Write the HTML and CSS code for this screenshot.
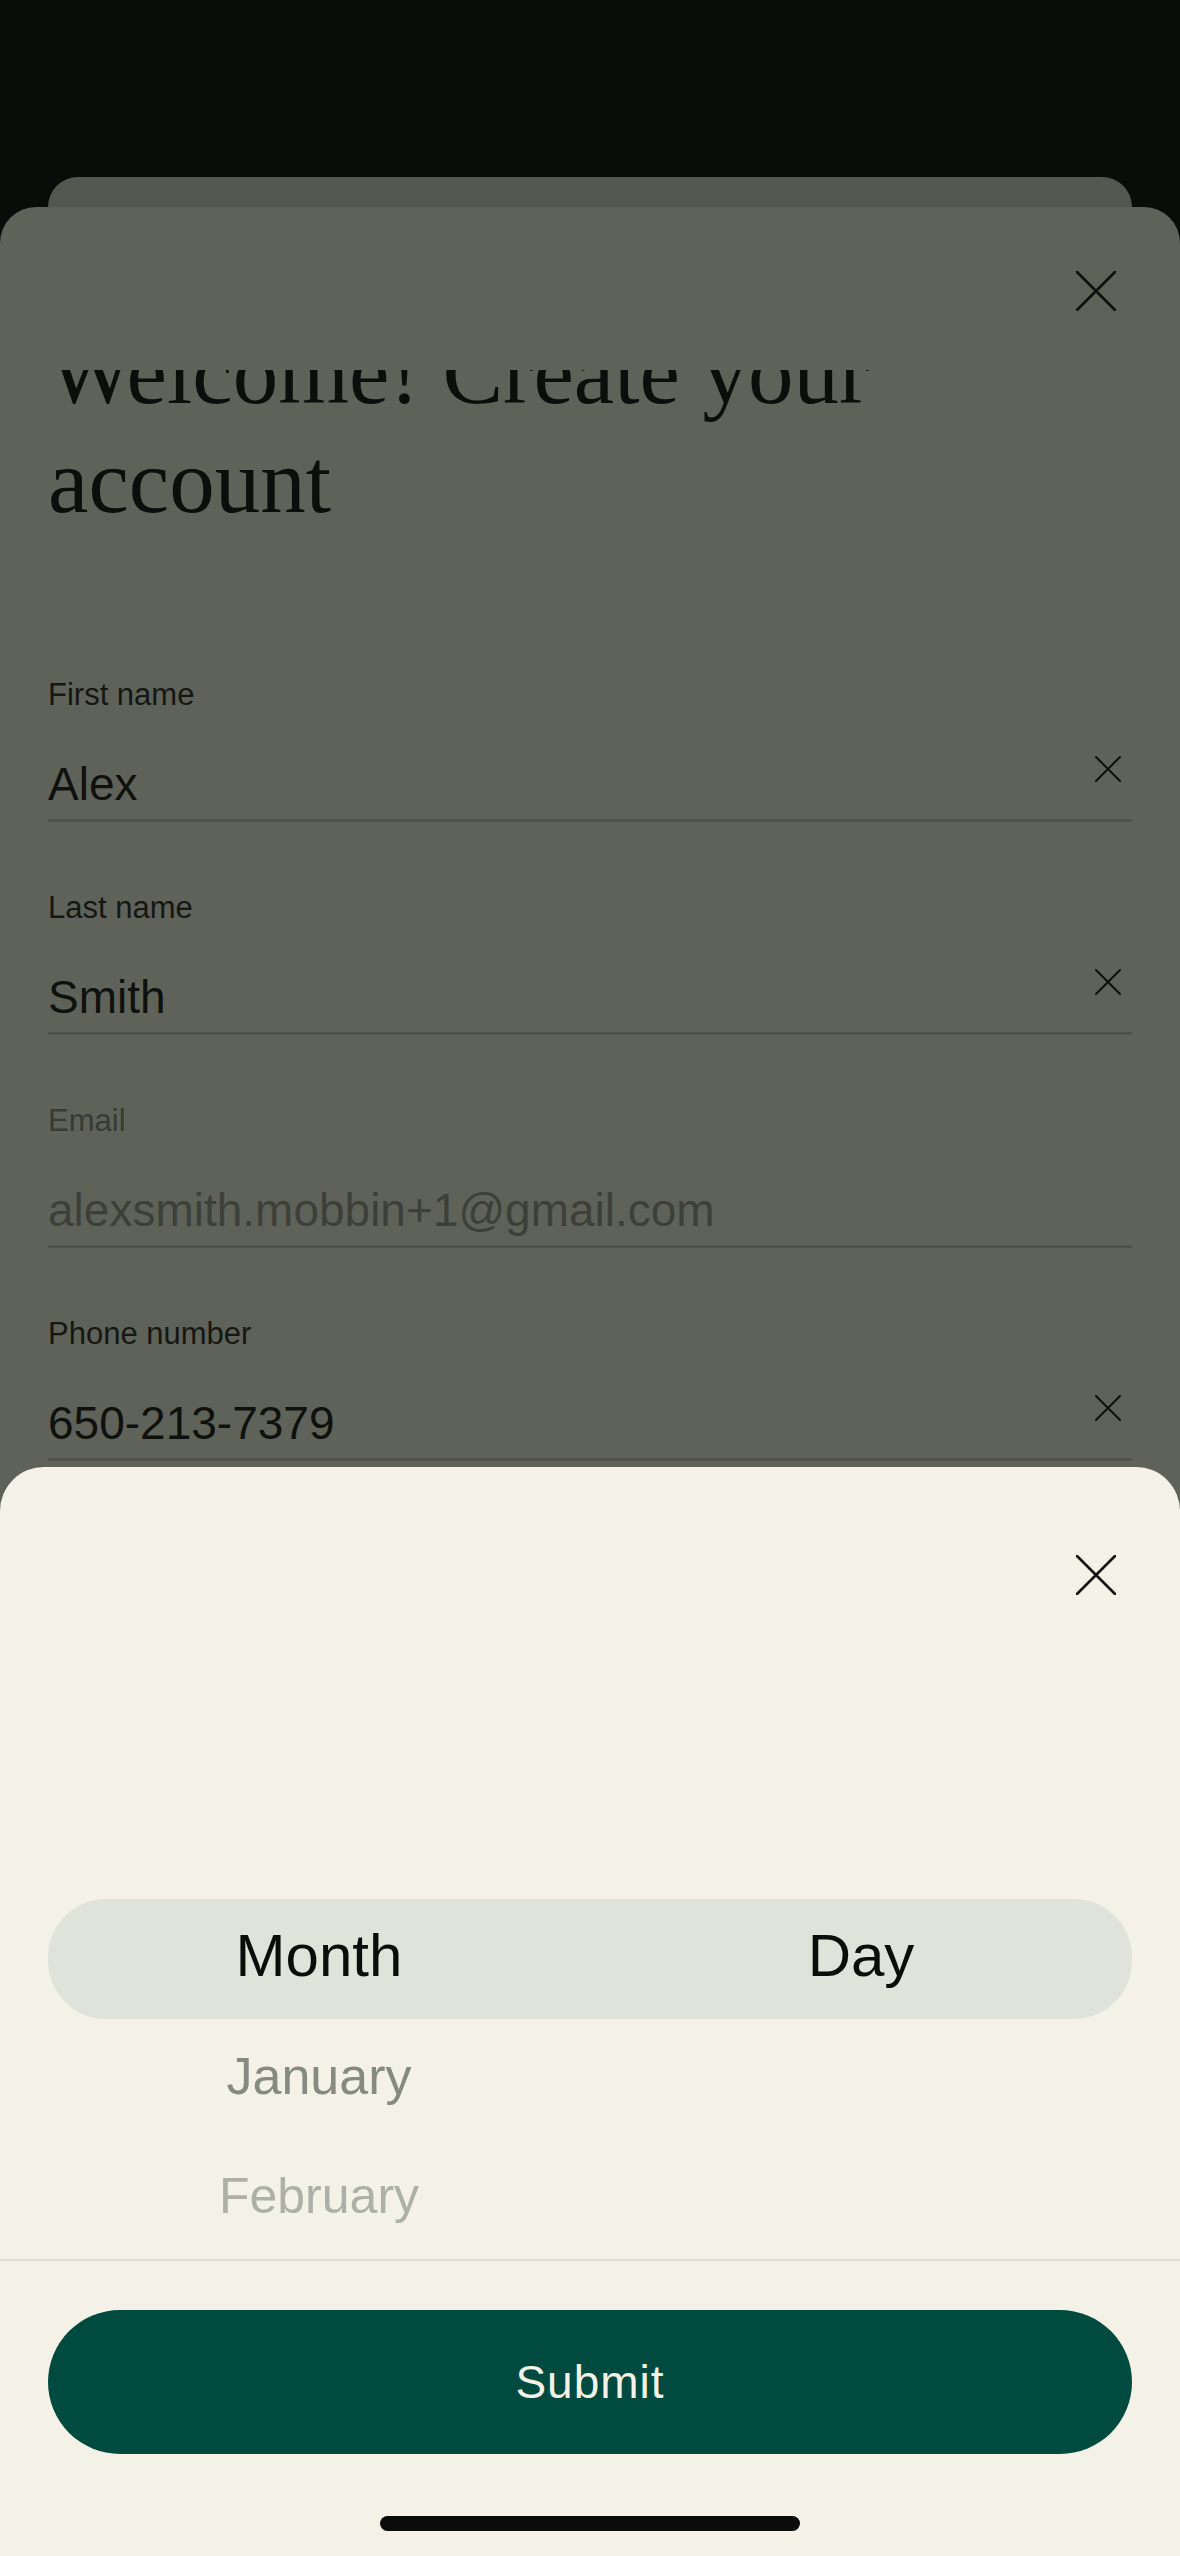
FILE: index.html
```html
<!DOCTYPE html>
<html lang="en">
<head>
  <meta charset="UTF-8" />
  <meta name="viewport" content="width=device-width, initial-scale=1.0" />
  <title>Create your account</title>
  <link rel="stylesheet" href="styles.css">
</head>
<body>
  <div class="screen">
    <div class="card-back"></div>

    <section class="card">
      <header class="card-head">
        <button class="close" aria-label="Close">
          <svg viewBox="0 0 40 40" width="40" height="40"><path d="M1 1 L39 39 M39 1 L1 39" /></svg>
        </button>
      </header>

      <div class="card-body">
        <h1>Welcome! Create your account</h1>

        <div class="field">
          <label>First name</label>
          <div class="field-value">
            <span>Alex</span>
            <svg class="clear" viewBox="0 0 26 26" width="26" height="26"><path d="M1 1 L25 25 M25 1 L1 25" /></svg>
          </div>
        </div>

        <div class="field">
          <label>Last name</label>
          <div class="field-value">
            <span>Smith</span>
            <svg class="clear" viewBox="0 0 26 26" width="26" height="26"><path d="M1 1 L25 25 M25 1 L1 25" /></svg>
          </div>
        </div>

        <div class="field disabled">
          <label>Email</label>
          <div class="field-value">
            <span>alexsmith.mobbin+1@gmail.com</span>
          </div>
        </div>

        <div class="field">
          <label>Phone number</label>
          <div class="field-value">
            <span>650-213-7379</span>
            <svg class="clear" viewBox="0 0 26 26" width="26" height="26"><path d="M1 1 L25 25 M25 1 L1 25" /></svg>
          </div>
        </div>
      </div>
    </section>

    <!-- birthday picker sheet -->
    <section class="sheet">
      <header class="sheet-head">
        <button class="close" aria-label="Close">
          <svg viewBox="0 0 40 40" width="40" height="40"><path d="M1 1 L39 39 M39 1 L1 39" /></svg>
        </button>
      </header>

      <div class="picker">
        <div class="picker-row selected">
          <span>Month</span>
          <span>Day</span>
        </div>
        <div class="picker-row near">
          <span>January</span>
          <span></span>
        </div>
        <div class="picker-row far">
          <span>February</span>
          <span></span>
        </div>
      </div>

      <footer class="sheet-foot">
        <button class="submit">Submit</button>
        <div class="home-bar"></div>
      </footer>
    </section>
  </div>
</body>
</html>
```

FILE: styles.css
```css
body {
  margin: 0;
  background: #0a0c09;
  font-family: 'Liberation Sans', Arial, sans-serif;
}
.screen {
  position: relative;
  width: 1180px;
  height: 2556px;
  overflow: hidden;
  padding-top: 177px;
  box-sizing: border-box;
  background: #0a0c09;
}
.card-back {
  height: 30px;
  margin: 0 48px;
  background: #545750;
  border-radius: 30px 30px 0 0;
}
.card {
  height: 2349px;
  display: flex;
  flex-direction: column;
  background: #5f6259;
  border-radius: 36px 36px 0 0;
}
.card-head {
  height: 163px;
  flex: none;
  box-sizing: border-box;
  display: flex;
  justify-content: flex-end;
  padding: 64px 64px 0 0;
}
.close {
  width: 40px;
  height: 40px;
  padding: 0;
  border: none;
  background: none;
  cursor: pointer;
}
.close svg,
.clear {
  display: block;
  fill: none;
  stroke: #0e100d;
  stroke-linecap: round;
}
.close svg { stroke-width: 2.6; }
.clear { stroke-width: 2; flex: none; margin-right: 11px; }

/* scrolled form, heading half under the header */
.card-body {
  flex: 1;
  overflow: hidden;
  padding: 0 48px;
}
.card-body h1 {
  margin: -52px 0 140px;
  font-family: 'Liberation Serif', 'Times New Roman', serif;
  font-weight: normal;
  font-size: 91px;
  line-height: 109px;
  color: #0c0e0b;
}
.field {
  margin-bottom: 67px;
  color: #0f110e;
}
.field label {
  display: block;
  font-size: 31px;
  line-height: 38px;
  margin-bottom: 42px;
  color: #151713;
}
.field-value {
  display: flex;
  justify-content: space-between;
  align-items: flex-start;
  font-size: 46px;
  line-height: 56px;
  padding-bottom: 7px;
  border-bottom: 3px solid #50534b;
}
.field.disabled label { color: #383b35; }
.field.disabled .field-value { color: #3d4039; }

/* bottom sheet */
.sheet {
  position: absolute;
  top: 1467px;
  left: 0;
  right: 0;
  bottom: 0;
  background: #f4f2e7;
  border-radius: 44px 44px 0 0;
}
.sheet-head {
  display: flex;
  justify-content: flex-end;
  padding: 88px 64px 0 0;
}
.picker {
  margin: 304px 48px 0;
  height: 360px;
  overflow: hidden;
}
.picker-row {
  display: grid;
  grid-template-columns: 1fr 1fr;
  height: 120px;
  line-height: 114px;
  text-align: center;
}
.picker-row.selected {
  background: #e0e3d9;
  border-radius: 58px;
  font-size: 60px;
  color: #0b0d0a;
}
.picker-row.near {
  font-size: 52px;
  color: #868b81;
}
.picker-row.far {
  font-size: 50px;
  color: #adb0a7;
}
.sheet-foot {
  border-top: 2px solid #dde0d5;
  padding: 49px 48px 0;
}
.submit {
  display: block;
  width: 100%;
  height: 144px;
  border: none;
  border-radius: 72px;
  background: #004a3f;
  color: #f4f2e7;
  font-family: 'Liberation Sans', Arial, sans-serif;
  font-size: 46px;
  letter-spacing: 1px;
  cursor: pointer;
}
.home-bar {
  width: 420px;
  height: 15px;
  margin: 62px auto 0;
  border-radius: 8px;
  background: #0a0c09;
}
```
